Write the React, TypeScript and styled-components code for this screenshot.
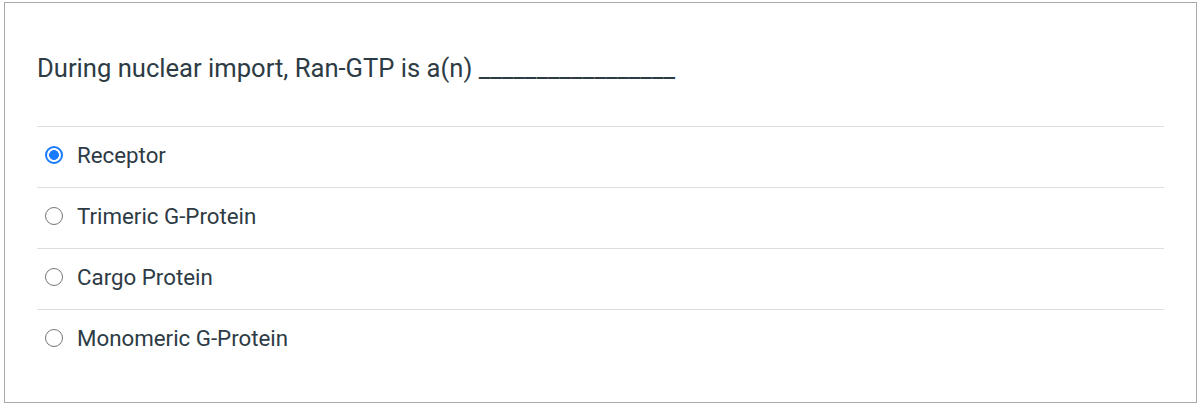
import React, { useState } from "react";
import styled, { createGlobalStyle } from "styled-components";

const Global = createGlobalStyle`
  html, body { margin: 0; padding: 0; background: #fff; }
  body { font-family: Roboto, "Liberation Sans", Arial, sans-serif; color: #2d3b45; }
`;

const Page = styled.div`
  padding: 2px 5px 0 4px;
`;

const Card = styled.div`
  box-sizing: border-box;
  height: 401px;
  border: 1px solid #aaaaaa;
  padding: 0 32px;
  display: flex;
  flex-direction: column;
`;

const Question = styled.div`
  font-size: 25.6px;
  line-height: 30px;
  padding: 50px 0 43px 0;
  border-bottom: 1px solid #dcdfe2;
`;

const Options = styled.div`
  display: flex;
  flex-direction: column;
`;

const Option = styled.label<{ $last?: boolean }>`
  display: flex;
  align-items: center;
  gap: 14px;
  height: 61px;
  box-sizing: border-box;
  padding: 0 0 5px 8px;
  border-bottom: ${(p) => (p.$last ? "none" : "1px solid #dcdfe2")};
  font-size: 22.3px;
  line-height: 26px;
  cursor: pointer;
`;

const Radio = styled.input`
  appearance: none;
  -webkit-appearance: none;
  box-sizing: border-box;
  width: 18px;
  height: 18px;
  margin: 0;
  flex: none;
  border-radius: 50%;
  border: 1.5px solid #767676;
  background: #fff;
  &:checked {
    border: 2px solid #1a7bff;
    background: radial-gradient(circle, #1a7bff 0 4.6px, #fff 5.2px);
  }
`;

const options = ["Receptor", "Trimeric G-Protein", "Cargo Protein", "Monomeric G-Protein"];

export default function App() {
  const [sel, setSel] = useState(0);
  return (
    <>
      <Global />
      <Page>
        <Card>
          <Question>During nuclear import, Ran-GTP is a(n) _________________</Question>
          <Options>
            {options.map((o, i) => (
              <Option key={o} $last={i === options.length - 1}>
                <Radio type="radio" name="q" checked={sel === i} onChange={() => setSel(i)} />
                {o}
              </Option>
            ))}
          </Options>
        </Card>
      </Page>
    </>
  );
}
